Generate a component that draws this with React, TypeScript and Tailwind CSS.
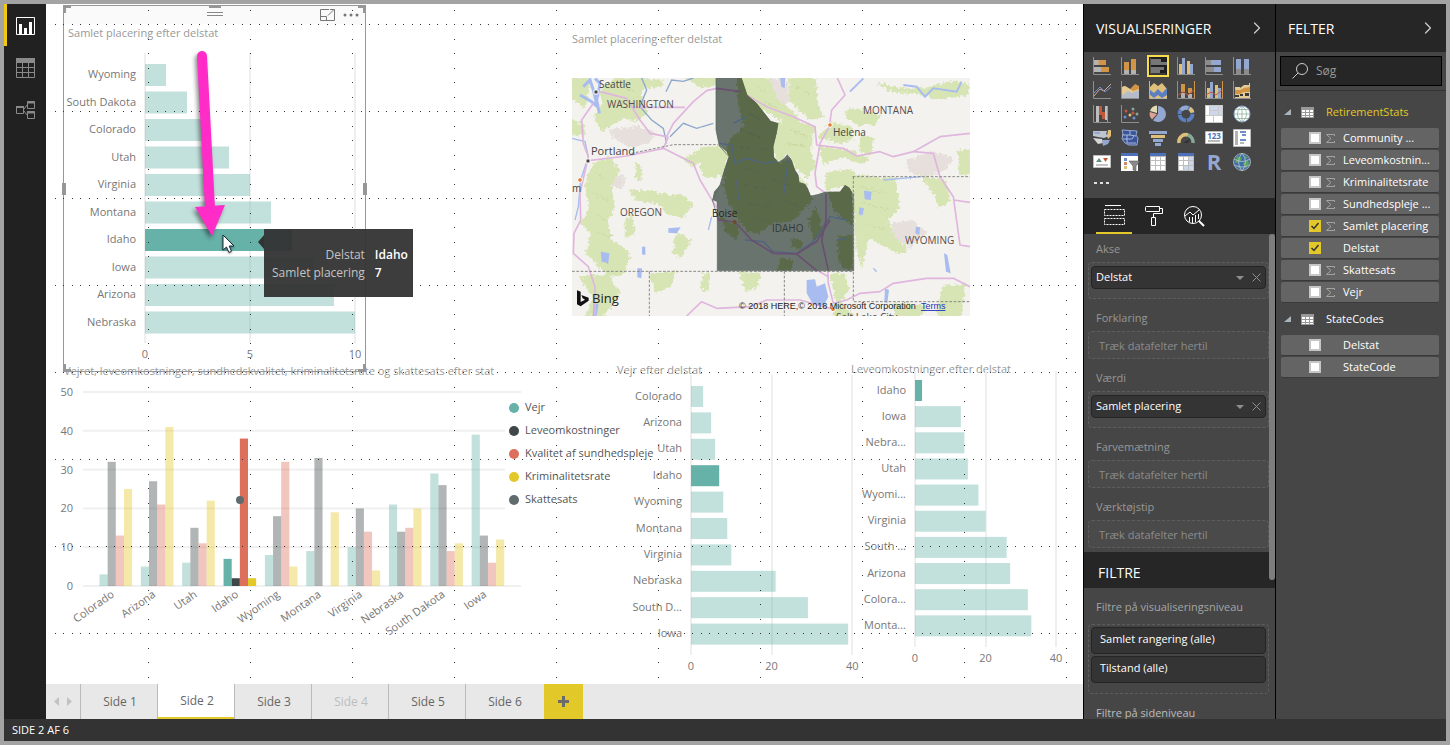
import type { ReactNode } from 'react';
import { ChevronRight } from 'lucide-react';

type Row = [string, number];

const ranking: Row[] = [
  ['Wyoming', 1], ['South Dakota', 2], ['Colorado', 3], ['Utah', 4], ['Virginia', 5],
  ['Montana', 6], ['Idaho', 7], ['Iowa', 8], ['Arizona', 9], ['Nebraska', 10],
];

const weather: Row[] = [
  ['Colorado', 3], ['Arizona', 5], ['Utah', 6], ['Idaho', 7], ['Wyoming', 8],
  ['Montana', 9], ['Virginia', 10], ['Nebraska', 21], ['South D...', 29], ['Iowa', 39],
];

const living: Row[] = [
  ['Idaho', 2], ['Iowa', 13], ['Nebra...', 14], ['Utah', 15], ['Wyomi...', 18],
  ['Virginia', 20], ['South ...', 26], ['Arizona', 27], ['Colora...', 32], ['Monta...', 33],
];

const combined: [string, number[]][] = [
  ['Colorado', [3, 32, 13, 25]],
  ['Arizona', [5, 27, 21, 41]],
  ['Utah', [6, 15, 11, 22]],
  ['Idaho', [7, 2, 38, 2]],
  ['Wyoming', [8, 18, 32, 5]],
  ['Montana', [9, 33, 0, 19]],
  ['Virginia', [10, 20, 14, 4]],
  ['Nebraska', [21, 14, 15, 20]],
  ['South Dakota', [29, 26, 9, 11]],
  ['Iowa', [39, 13, 6, 12]],
];

const seriesColors = ['#66b1a8', '#3f4749', '#dd705c', '#e3c829'];

const legend = [
  { label: 'Vejr', color: '#66b1a8' },
  { label: 'Leveomkostninger', color: '#3f4749' },
  { label: 'Kvalitet af sundhedspleje', color: '#dd705c' },
  { label: 'Kriminalitetsrate', color: '#e3c829' },
  { label: 'Skattesats', color: '#5f6b6d' },
];

const tables = [
  {
    name: 'RetirementStats',
    active: true,
    fields: [
      { label: 'Community ...', sum: true },
      { label: 'Leveomkostnin...', sum: true },
      { label: 'Kriminalitetsrate', sum: true },
      { label: 'Sundhedspleje ...', sum: true },
      { label: 'Samlet placering', sum: true, checked: true },
      { label: 'Delstat', checked: true },
      { label: 'Skattesats', sum: true },
      { label: 'Vejr', sum: true },
    ],
  },
  {
    name: 'StateCodes',
    active: false,
    fields: [{ label: 'Delstat' }, { label: 'StateCode' }],
  },
] as { name: string; active: boolean; fields: { label: string; sum?: boolean; checked?: boolean }[] }[];

const wells = [
  { label: 'Akse', value: 'Delstat' },
  { label: 'Forklaring' },
  { label: 'Værdi', value: 'Samlet placering' },
  { label: 'Farvemætning' },
  { label: 'Værktøjstip' },
];

interface BarChartProps {
  rows: Row[];
  width: number;
  height: number;
  x0: number;
  unit: number;
  y0: number;
  step: number;
  bar: number;
  grid: [number, number];
  ticks: number[];
}

const BarChart = ({ rows, width, height, x0, unit, y0, step, bar, grid, ticks }: BarChartProps) => (
  <svg width={width} height={height} className="block overflow-visible">
    {ticks.map((t) => (
      <g key={t}>
        <rect x={Math.round(x0 + t * unit) - 1} y={grid[0]} width={2} height={grid[1] - grid[0]} fill="#efefef" />
        <text x={x0 + t * unit} y={grid[1] + 15} textAnchor="middle" className="fill-[#777777] text-[11px]">{t}</text>
      </g>
    ))}
    {rows.map(([name, value], i) => (
      <g key={name}>
        <rect
          x={x0}
          y={y0 + i * step}
          width={value * unit}
          height={bar}
          fill="#66b1a8"
          opacity={name === 'Idaho' ? 1 : 0.4}
        />
        <text x={x0 - 9} y={y0 + i * step + bar / 2 + 3} textAnchor="end" className="fill-[#777777] text-[11px]">{name}</text>
      </g>
    ))}
  </svg>
);

const ColumnChart = () => (
  <svg width={445} height={270} className="block shrink-0 overflow-visible">
    {[0, 10, 20, 30, 40, 50].map((t) => (
      <g key={t}>
        <rect x={19} y={207 - t * 3.88} width={t % 50 === 0 ? 438 : 422} height={2} fill="#f0f0f0" />
        <text x={9} y={212 - t * 3.88} textAnchor="end" className="fill-[#777777] text-[11px]">{t}</text>
      </g>
    ))}
    {combined.map(([name, values], i) => (
      <g key={name}>
        {values.map((v, s) => (
          <rect
            key={s}
            x={35.5 + i * 41.35 + s * 8.15}
            y={208 - v * 3.88}
            width={8.15}
            height={v * 3.88}
            fill={seriesColors[s]}
            opacity={name === 'Idaho' ? 1 : 0.4}
          />
        ))}
        <text
          transform={`translate(${51 + i * 41.35} 218) rotate(-35)`}
          textAnchor="end"
          className="fill-[#777777] text-[11px]"
        >
          {name}
        </text>
      </g>
    ))}
    <circle cx={176} cy={122} r={4} fill="#5f6b6d" />
  </svg>
);

const StateMap = () => (
  <svg width={398} height={238} className="block">
    <defs>
      <filter id="rough" x="-5%" y="-5%" width="110%" height="110%">
        <feTurbulence type="fractalNoise" baseFrequency="0.1" numOctaves="4" seed="4" />
        <feDisplacementMap in="SourceGraphic" scale="22" xChannelSelector="R" yChannelSelector="G" />
      </filter>
      <filter id="ragged">
        <feTurbulence type="fractalNoise" baseFrequency="0.2" numOctaves="2" seed="8" />
        <feDisplacementMap in="SourceGraphic" scale="5" xChannelSelector="R" yChannelSelector="G" />
      </filter>
      <clipPath id="idaho">
        <path d="M468 174H545L562 225L590 250L622 290L632 303L655 310L650 340L640 380L642 412L655 426L672 415L682 403L695 420L705 450L715 465L718 487L735 492L745 508L752 527L775 522L795 515H840L855 495L868 503L878 520L881 752H472V590L470 545L457 540L462 515L480 495L492 450L507 410L500 395L478 378L472 350L468 330Z" />
      </clipPath>
    </defs>
    <rect width={398} height={238} fill="#f3f2ee" />
    <g transform="scale(.33333) translate(-36 -174)">
      {/* towns and dry land */}
      <g fill="#e6dfdb" filter="url(#rough)">
        <path d="M145 330L230 318L290 335L270 365L215 385L160 350Z M620 174L680 180L690 240L660 270L625 225Z M1040 420L1120 395L1180 410L1160 450L1100 470L1045 455Z M995 610L1060 600L1100 640L1050 680L1000 660Z M150 460L195 470L190 505L155 500Z" />
      </g>
      {/* forests */}
      <g fill="#d7e4b3" stroke="#d7e4b3" strokeWidth="5" filter="url(#rough)">
        <path d="M165 174H250L245 230L262 280L225 300L190 290L165 310L125 330L105 290L130 250L120 215Z" />
        <path d="M36 174H90L75 260L36 235Z M36 300L75 320L70 345L36 340Z" />
        <path d="M100 430L150 415L175 450L150 500L165 560L140 600L155 660L210 700L190 760L150 770L120 740L80 700L95 640L65 610L90 560L75 500Z" />
        <path d="M60 770L140 765L180 820L130 888H80L100 830Z M270 762L345 758L330 800L290 815Z" />
        <path d="M210 510L290 520L370 530L395 550L370 590L320 580L300 550L230 540Z M350 640L390 660L365 710L340 700Z" />
        <path d="M375 415L430 385L490 380L505 410L485 465L440 475L420 440L430 415L395 440Z" />
        <path d="M250 180L310 182L300 200L255 200Z M385 174H470V195L420 200Z" />
        <path d="M545 174H625L650 240L690 270L720 300L700 330L665 300L590 260L560 225Z" />
        <path d="M690 174H765L770 250L790 290L750 295L715 265L690 240Z" />
        <path d="M655 310L690 300L760 320L750 400L765 440L740 470L710 445L685 400L650 425L640 380Z" />
        <path d="M865 265L915 270L960 290L945 310L900 315L860 290Z M815 310L870 320L880 355L840 370L780 350Z M905 350L940 355L930 405L900 390Z" />
        <path d="M780 380L860 390L925 415L905 430L850 410L790 430Z M800 460L870 450L890 470L1005 475L1015 560L985 600L1000 650L1040 690L1020 700L960 670L925 650L905 740L890 680L880 520L855 495L800 510Z" />
        <path d="M955 190L1010 205L1100 205L1180 185L1225 195L1220 225L1140 235L1080 220L1000 215Z M1085 470L1150 480L1170 540L1140 560L1120 520Z" />
        <path d="M1195 395L1230 390V460L1200 465Z M810 765L850 760L865 800L840 850L880 888H820L830 830Z M1150 800L1215 795L1200 888H1130Z M1000 852L1100 858L1080 888H1010Z" />
        <path d="M540 760L600 760L590 800L560 810Z M430 760L450 765L440 810L425 805Z" />
        <path d="M195 600L215 590L220 640L200 650Z M230 430L245 440L240 480L228 470Z M700 470L740 490L735 510L710 490Z" />
      </g>
      <g fill="none" stroke="#c9d8a1" strokeWidth="3" filter="url(#rough)">
        <path d="M110 460L140 480M100 520L140 540M105 580L135 600M110 640L150 650M180 200L230 215M170 240L230 260M590 200L620 215M610 240L650 265M710 200L750 220M900 500L980 520M910 550L990 570M920 610L970 630M690 330L740 350M680 370L740 380" />
      </g>
      {/* lakes and rivers */}
      <g fill="#a8bcf0" filter="url(#ragged)">
        <path d="M740 780L765 778L770 800L795 790L805 830L790 860L760 855L740 820Z M912 512L935 515L932 540L914 538Z M898 562L912 565L908 585L896 583Z M1068 620L1080 622L1078 645L1066 640Z M660 174H676L674 205L664 200Z M122 695L148 700L145 730L125 725Z M232 745L246 745L244 775L232 772Z M246 680L256 680L256 705L246 703Z M325 625L362 622L350 640L325 638Z" />
        <path d="M1152 700L1162 705L1172 760L1158 755Z M975 805L987 810L982 850L973 845Z M100 850L116 852L110 888H98Z" />
      </g>
      <g fill="none" stroke="#a8bcf0" strokeWidth="4" filter="url(#ragged)">
        <path d="M70 200L90 180L100 210L112 260L95 245L60 225M105 175L120 190L110 240L118 280" strokeWidth="9" />
        <path d="M36 355L75 365L85 410L62 480L55 560L45 600" />
        <path d="M245 174L260 210L240 260L275 300L310 325L320 370M330 350L370 310L410 325L460 310" stroke="#8ca8cc" />
        <path d="M318 215L335 180L370 184L400 174" stroke="#8ca8cc" />
        <path d="M870 215L910 175M1030 195L1070 200L1095 230L1120 205L1190 215L1205 185" strokeWidth="6" />
        <path d="M455 590L445 630M970 480L1085 470M940 745L950 755" />
      </g>
      {/* highways */}
      <g fill="none" stroke="#e0b6de" strokeWidth="5" strokeLinejoin="round">
        <path d="M120 215L200 235L240 300L270 340L320 350L340 310L400 245L440 212L470 205L560 225L620 260L700 290L765 320L770 375L850 385L890 408L960 395L1000 410L1060 395L1140 350L1230 340" />
        <path d="M215 262H375M100 250L65 300L70 370L85 410L60 520L62 600L42 640L40 700L85 740L105 800V888" />
        <path d="M85 422L200 408L310 385L400 430L420 480L450 530L475 570L525 606L575 660L640 700L710 702L770 750L805 770" />
        <path d="M310 385L325 350M832 174L855 225L815 270L808 320L780 370L765 460L770 500L798 520" />
        <path d="M1060 395L1120 400L1140 470L1180 530L1200 675L1230 680M1180 540L1230 547" />
        <path d="M800 670L805 790L820 850L860 840L900 820L960 815L1000 790L1100 775L1180 775L1230 800M380 888L425 845L470 865L570 860L620 840H720L810 865" />
      </g>
      {/* Idaho, selected */}
      <g clipPath="url(#idaho)">
        <rect x="450" y="170" width="440" height="590" fill="#6a746e" />
        <g fill="#5a6b49" filter="url(#rough)">
          <path d="M535 160L560 170L670 300L660 430L690 410L740 490L760 540L700 600L640 610L600 640L560 635L515 570L490 500L500 420L500 370L550 320L530 220Z" />
          <path d="M800 515L880 490V620L850 600L820 570Z M770 560L790 640L760 660L745 600Z M480 590L540 620L530 660L500 640Z M830 650L881 640V752L840 740Z M700 650L730 665L720 690L695 680Z M660 715L700 720L695 752H650Z" />
        </g>
        <g fill="none" stroke="#52634a" strokeWidth="3" filter="url(#rough)">
          <path d="M540 230L590 250M560 280L610 300M540 330L600 350M540 380L620 390M550 440L610 460M550 490L620 510M560 550L630 560M640 480L690 500M670 540L720 560M570 590L620 600" />
        </g>
        <g fill="none" stroke="#4e6380" strokeWidth="4" filter="url(#ragged)">
          <path d="M478 370L515 375L525 430L560 415L610 430L650 425M530 480L535 540M520 310L560 290M685 420L670 530M555 660L610 665L640 695L710 700L760 665L810 590L860 600M830 660L860 655" />
        </g>
        <g fill="none" stroke="#694f70" strokeWidth="5">
          <path d="M450 530L475 600L525 606L575 660L640 700L710 702L810 785M798 520V600L785 660L805 752M710 702L770 665L810 600M468 205L545 215" />
        </g>
        <circle cx="524" cy="606" r="6" fill="#6e4a26" />
      </g>
      <g fill="none" stroke="#888888" strokeWidth="3" strokeDasharray="8 5">
        <path d="M215 400L340 374H475M36 754H882M268 754V888M673 754V888M878 470H1230M880 470V845H1230" />
      </g>
      <path d="M468 174V330L478 378L507 410L480 495L457 540L472 590V752H881V520" fill="none" stroke="#56605a" strokeWidth="2" />
      <g stroke="#ffffff" strokeWidth="3">
        <path d="M102 210h12v12h-12zM78 417h12v12H78z" fill="#444444" />
        <circle cx="810" cy="315" r="7" fill="#e2813a" />
        <circle cx="60" cy="480" r="7" fill="#e2813a" />
        <circle cx="819" cy="868" r="7" fill="#e2813a" />
      </g>
      <path d="M51 811L62 815V846L75 839L68 835L64 825L86 833V842L62 859L51 853Z" fill="#111111" />
    </g>
    <g className="fill-[#444444] text-[11px]">
      <text x={27} y={10} className="text-[10px]">Seattle</text>
      <text x={19} y={77}>Portland</text>
      <text x={261} y={58} className="text-[10px]">Helena</text>
      <text x={0} y={114} className="text-[10px]">m</text>
      <text x={140} y={139} className="fill-[#222222] text-[10px]">Boise</text>
      <text x={264} y={243} className="text-[10px]">Salt Lake City</text>
    </g>
    <g className="fill-[#594d50] text-[10px]">
      <text x={35} y={30}>WASHINGTON</text>
      <text x={291} y={36}>MONTANA</text>
      <text x={48} y={138}>OREGON</text>
      <text x={200} y={154} className="fill-[#303a35]">IDAHO</text>
      <text x={333} y={166}>WYOMING</text>
    </g>
    <text x={20} y={225} className="fill-[#222222] text-[13px]">Bing</text>
    <text x={167} y={231} className="fill-[#222222] font-['Liberation_Sans'] text-[9px]">© 2018 HERE,© 2018 Microsoft Corporation</text>
    <a href="#terms">
      <text x={349} y={231} className="fill-[#2236c0] font-['Liberation_Sans'] text-[9px] underline">Terms</text>
    </a>
  </svg>
);

const Axis = () => <path d="M.5 0V17.5H18" fill="none" stroke="#8f8f8f" />;

// gallery of visual types, six per row
const visualIcons: [string, ReactNode][] = [
  ['Stablet liggende', <><Axis /><path d="M1 3h5v5H1zM1 10h7v5H1z" fill="#b3b3b3" /><path d="M5.500 3H13v5H5.500zM8 10h8v5H8z" fill="#d29447" /></>],
  ['Stablet søjle', <><Axis /><path d="M3 13h5v4H3zM10 13h5v4h-5z" fill="#b3b3b3" /><path d="M3 5h5v8H3zM10 2h5v11h-5z" fill="#d29447" /></>],
  ['Grupperet liggende', <><path d="M-1-1h20v20H-1z" fill="#1f1f1f" stroke="#f5dc4a" strokeWidth="2" /><path d="M1.500 1V17H17" fill="none" stroke="#555" /><path d="M2 2h10v3H2zM2 5h16v3H2zM2 10h13v3H2zM2 13h9v3H2z" fill="#777" /></>],
  ['Grupperet søjle', <><Axis /><path d="M2 7h3v10H2zM10 4h3v13h-3z" fill="#dfc07a" /><path d="M5 1h3v16H5zM13 7h3v10h-3z" fill="#94a7d0" /></>],
  ['100% liggende', <><Axis /><path d="M1 3h5v5H1zM1 10h8v5H1z" fill="#8c8c8c" /><path d="M6 3h10v5H6zM9 10h7v5H9z" fill="#94a7d0" /></>],
  ['100% søjle', <><Axis /><path d="M3 12h5v5H3zM11 12h5v5h-5z" fill="#8c8c8c" /><path d="M3 2h5v10H3zM11 2h5v10h-5z" fill="#94a7d0" /></>],
  ['Kurve', <><Axis /><path d="M1 15L7 8l4 2 7-7" fill="none" stroke="#d9a596" /><path d="M1 12l6-6 5 5 6-5" fill="none" stroke="#6f8fcb" /></>],
  ['Område', <><Axis /><path d="M1 6l3-1 5 3 5-5 4 2v12H1z" fill="#d29447" /><path d="M1 6l3-1 5 3 3 2 6-2v9H1z" fill="#e5cb93" /><path d="M1 14l6-4 4 2 7-3v8H1z" fill="#a9b9d8" opacity=".8" /></>],
  ['Stablet område', <><path d="M0 7l5-5 4 3 4-3 5 6v9H0z" fill="#dfc07a" /><path d="M0 8l5 4 4-4 4 4 5-5v7l-5 3-4-3-4 3-5-4z" fill="#5b7fc0" /><path d="M.5 0V17.500H18" fill="none" stroke="#b3b3b3" /></>],
  ['Kurve og stablet søjle', <><Axis /><path d="M4 3h4v8H4zM11 7h4v5h-4z" fill="#d29447" /><path d="M4 12h4v5H4zM11 13h4v4h-4z" fill="#b3b3b3" /><path d="M17.500 0v17" stroke="#d29447" /><path d="M1 14l5-3 5 3 6-5" fill="none" stroke="#c4583a" /></>],
  ['Kurve og grupperet søjle', <><Axis /><path d="M2 7h3v10H2zM10 4h3v13h-3z" fill="#dfc07a" /><path d="M5 1h3v16H5zM13 7h3v10h-3z" fill="#94a7d0" /><path d="M17.500 0v17" stroke="#d29447" /><path d="M1 14l5-3 5 3 6-5" fill="none" stroke="#c4583a" /></>],
  ['Bånd', <><Axis /><path d="M2 6h5v11H2zM7 7l4-3v13H7zM11 4h5V2h1v15h-6z" fill="#e5cb93" /><path d="M2 9h5l4-2 6-1v5h-6l-4 2H2z" fill="#d29447" /><path d="M2 14h4v2H2zM7 13h3v2H7zM12 12h4v3h-4z" fill="#3a3a3a" /></>],
  ['Vandfald', <><Axis /><path d="M3 1h3v16H3zM12 1h3v14h-3z" fill="#bdbdbd" /><path d="M6 1h3v9H6zM9 7h3v7H9z" fill="#c4583a" /><path d="M14 1h1v16h-1z" fill="#7fa894" /></>],
  ['Punkt', <><Axis /><g fill="#c4583a"><circle cx="5" cy="6" r="1.500" /><circle cx="12" cy="8" r="1.500" /></g><g fill="#86a998"><circle cx="12" cy="4" r="1.500" /><circle cx="16" cy="9" r="1.500" /></g><g fill="#6f8fcb"><circle cx="4" cy="12" r="1.500" /><circle cx="13" cy="13" r="1.500" /></g><circle cx="9" cy="10" r="1.500" fill="#dfc07a" /></>],
  ['Cirkel', <><path d="M9 9V1a8 8 0 1 1-5 14.300z" fill="#94a7d0" /><path d="M8 8L1 6a8 8 0 0 1 7-5.500z" fill="#e5d9b3" /><path d="M8 9l-5 5.500A8 8 0 0 1 .800 7z" fill="#dba495" /></>],
  ['Krans', <g fill="none" strokeWidth="4"><circle cx="9" cy="9" r="6.500" stroke="#5b7fc0" strokeDasharray="9 1" /><path d="M4 5a6.500 6.500 0 0 1 7-2" stroke="#94a7d0" /><path d="M12.500 3.500a6.500 6.500 0 0 1 3 4" stroke="#dfc07a" /></g>],
  ['Træstruktur', <><path d="M0 0h18v18H0z" fill="#c9c9c9" /><path d="M1 1h3v9H1zM1 11h7v6H1zM9 11h8v6H9z" fill="#fff" /><path d="M5 1h8v4H5zM5 6h8v4H5zM14 1h3v9h-3z" fill="#ced7ea" /></>],
  ['Kort', <><circle cx="9" cy="9" r="8" fill="#fff" stroke="#8fa6cf" /><path d="M9 1v16M1 9h16M3 4.500h12M3 13.500h12M9 1C3 5 3 13 9 17M9 1c6 4 6 12 0 16" fill="none" stroke="#7fa894" strokeWidth=".7" /></>],
  ['Kartogram', <><path d="M0 2h14l-1 3 3 2-5 2-6-1-5-1z" fill="#bfc5cf" /><path d="M0 3h7v2H2z" fill="#94a7d0" /><path d="M15 1h3v6l-3 3-1-3z" fill="#dfc07a" /><path d="M0 9l9 1 1 4-5 1z" fill="#d6d6d6" /><path d="M9 11l8 0-2 4-5 2z" fill="#94a7d0" /></>],
  ['Figurkort', <><path d="M1 1l15 1-1 4 2 3-1 7H8l-4-2-3-4 1-5z" fill="#39549a" stroke="#94a7d0" /><path d="M1 6h8v-4M9 6l6 1M6 6v8l9 0M2 10h9l2-3" fill="none" stroke="#a9b9d8" /></>],
  ['Tragt', <><path d="M0 2h18v3H0zM4 10h10v3H4z" fill="#94a7d0" /><path d="M2 6h14v3H2z" fill="#dfc07a" /><path d="M6 14h6v3H6z" fill="#94a7d0" /></>],
  ['Måler', <g fill="none" strokeWidth="3.500"><path d="M2 14a7 7 0 0 1 9-8" stroke="#dfc07a" /><path d="M11 6a7.500 7.500 0 0 1 5 8" stroke="#86a998" /><path d="M6 14h5l2-4z" fill="#303030" stroke="none" /></g>],
  ['Kort med tal', <><path d="M.5 2.500h17v12H.5z" fill="#fff" stroke="#bdbdbd" /><text x="9" y="9.500" textAnchor="middle" fill="#4c71b8" fontSize="8" fontWeight="700">123</text><path d="M3 12h12" stroke="#777" /></>],
  ['Kort med flere rækker', <><path d="M.5.5h17v17H.5z" fill="#fff" stroke="#bdbdbd" /><path d="M2 2h3v14H2z" fill="#b3b3b3" /><path d="M7 3h6M9 6h4M7 11h6" stroke="#6f8fcb" strokeWidth="2" /><path d="M7 14h4" stroke="#777" /></>],
  ['KPI', <><path d="M.5 2.500h17v12H.5z" fill="#fff" stroke="#bdbdbd" /><path d="M3 9l3-4 3 4z" fill="#629079" /><path d="M10 5h5l-2.500 4z" fill="#c4583a" /><path d="M3 12h12" stroke="#888" /></>],
  ['Udsnit', <><path d="M0 0h17v18H0z" fill="#fff" /><path d="M0 0h17v3H0z" fill="#4c71b8" /><path d="M3 5h3v3H3z" fill="#6f8fcb" /><path d="M3 9h3v3H3z" fill="#c98a6f" /><path d="M3 13h3v3H3z" fill="#dfc07a" /><path d="M8 8h11l-4 5v5l-3-1v-4z" fill="#8a8a8a" stroke="#444" strokeWidth=".5" /></>],
  ['Tabel', <><path d="M1 0h16v18H1z" fill="#bdbdbd" /><path d="M1 0h16v3H1z" fill="#4c71b8" /><path d="M2 4h4v3H2zM7 4h4v3H7zM12 4h4v3h-4zM2 8h4v4H2zM7 8h4v4H7zM12 8h4v4h-4zM2 13h4v4H2zM7 13h4v4H7zM12 13h4v4h-4z" fill="#fff" /></>],
  ['Matrix', <><path d="M1 0h16v18H1z" fill="#bdbdbd" /><path d="M1 0h16v3H1z" fill="#4c71b8" /><path d="M2 4h4v3H2zM7 4h4v3H7zM2 8h4v4H2zM7 8h4v4H7zM2 13h4v4H2z" fill="#fff" /><path d="M12 4h4v3h-4zM12 8h4v4h-4zM7 13h4v4H7zM12 13h4v4h-4z" fill="#ced7ea" /></>],
  ['R-script', <text x="9" y="17" textAnchor="middle" fill="#94a7d0" fontSize="22" fontWeight="700">R</text>],
  ['ArcGIS', <><circle cx="9" cy="9" r="8.500" fill="#3f6eab" stroke="#a5a5a5" /><path d="M4 3l5 2-2 4-5 1zM10 10l5-3 1 4-4 5zM4 12l4 2-1 2zM11 2l4 3-3 1z" fill="#57a55b" /><path d="M1 6q8 5 16 0M1 12q8 4 16 0M9 0q-7 9 0 18M9 0q7 9 0 18" fill="none" stroke="#b9c3cf" strokeWidth=".8" /></>],
];

const Dots = () => (
  <svg className="pointer-events-none absolute inset-0 h-full w-full">
    <defs>
      <pattern id="dots" width={102} height={87} y={20} patternUnits="userSpaceOnUse">
        <path
          d="M0 0h1v1H0zM9 0h1v1h-1zM17 0h1v1h-1zM26 0h1v1h-1zM34 0h1v1h-1zM43 0h1v1h-1zM51 0h1v1h-1zM60 0h1v1h-1zM68 0h1v1h-1zM77 0h1v1h-1zM85 0h1v1h-1zM94 0h1v1h-1zM0 15h1v1H0zM0 29h1v1H0zM0 44h1v1H0zM0 58h1v1H0zM0 73h1v1H0z"
          fill="#333333"
        />
      </pattern>
    </defs>
    <rect x={2} width="100%" height="100%" fill="url(#dots)" />
  </svg>
);

const VisualTitle = ({ children }: { children: ReactNode }) => (
  <h2 className="text-[11px] leading-[14px] whitespace-nowrap text-[#999999]">{children}</h2>
);

const Handle = ({ className }: { className: string }) => <span className={`absolute bg-[#979797] ${className}`} />;

const Canvas = () => (
  <main className="relative min-h-0 flex-1 overflow-hidden bg-white">
    <section className="absolute top-[360px] left-[18px]">
      <VisualTitle>Vejret, leveomkostninger, sundhedskvalitet, kriminalitetsrate og skattesats efter stat</VisualTitle>
      <div className="flex">
        <ColumnChart />
        <ul className="pt-4.5 text-[11px] whitespace-nowrap text-[#555555]">
          {legend.map((item) => (
            <li key={item.label} className="flex h-[23px] items-center gap-1.5">
              <svg width={10} height={10}>
                <circle cx={5} cy={5} r={5} fill={item.color} />
              </svg>
              {item.label}
            </li>
          ))}
        </ul>
      </div>
    </section>

    <section className="absolute top-[359px] left-[571px]">
      <VisualTitle>Vejr efter delstat</VisualTitle>
      <BarChart rows={weather} width={240} height={300} x0={74} unit={4.03} y0={9} step={26.4} bar={21} grid={[-2, 278]} ticks={[0, 20, 40]} />
    </section>

    <section className="absolute top-[358px] left-[805px]">
      <VisualTitle>Leveomkostninger efter delstat</VisualTitle>
      <BarChart rows={living} width={210} height={290} x0={64} unit={3.525} y0={4} step={26.15} bar={21} grid={[-5, 271]} ticks={[0, 20, 40]} />
    </section>

    {/* selected visual */}
    <section className="absolute top-px left-[17px] h-[367px] w-[303px] border border-[#979797]">
      <div className="flex h-4.5 items-center justify-end gap-2 bg-[#fafafa] pr-1.5">
        <button aria-label="Fokustilstand">
          <svg width={15} height={12} viewBox="0 0 15 12" fill="none" stroke="#777777" className="block">
            <path d="M9 .5H.5v11h14V5M.5 7.500h6v4M8 6.500L14 .5M10 .5h4.500V5" />
          </svg>
        </button>
        <button aria-label="Flere indstillinger">
          <svg width={16} height={4} fill="#777777" className="block">
            <circle cx={2} cy={2} r={1.5} />
            <circle cx={8} cy={2} r={1.5} />
            <circle cx={14} cy={2} r={1.5} />
          </svg>
        </button>
      </div>
      <div className="pt-0.5 pl-1">
        <VisualTitle>Samlet placering efter delstat</VisualTitle>
      </div>
      <BarChart rows={ranking} width={300} height={320} x0={81} unit={21} y0={24} step={27.5} bar={22} grid={[13, 303]} ticks={[0, 5, 10]} />
      <span className="absolute top-1.5 left-1/2 h-1 w-4 -translate-x-1/2 border-y border-[#888888]" />
      <Handle className="-top-px -left-px h-2 w-[3px]" />
      <Handle className="-top-px -left-px h-[3px] w-2" />
      <Handle className="-top-px -right-px h-2 w-[3px]" />
      <Handle className="-top-px -right-px h-[3px] w-2" />
      <Handle className="-bottom-px -left-px h-2 w-[3px]" />
      <Handle className="-bottom-px -left-px h-[3px] w-2" />
      <Handle className="-right-px -bottom-px h-2 w-[3px]" />
      <Handle className="-right-px -bottom-px h-[3px] w-2" />
      <Handle className="-top-px left-1/2 h-[3px] w-3 -translate-x-1/2" />
      <Handle className="top-1/2 -left-0.5 h-3 w-1 -translate-y-1/2" />
      <Handle className="top-1/2 -right-0.5 h-3 w-1 -translate-y-1/2" />
    </section>

    <Dots />

    <section className="absolute top-7 left-[526px]">
      <VisualTitle>Samlet placering efter delstat</VisualTitle>
      <div className="mt-8">
        <StateMap />
      </div>
    </section>

    {/* arrow and pointer */}
    <svg width={60} height={210} className="absolute top-11 left-[142px] overflow-visible drop-shadow-[-2px_3px_2px_rgba(0,0,0,0.45)]">
      <path d="M14 8L22 160" stroke="#ff2cc8" strokeWidth={10} strokeLinecap="round" />
      <path d="M7 159L37 157L24 188Z" fill="#ff2cc8" />
    </svg>
    <svg width={14} height={20} viewBox="0 0 14 20" className="absolute top-[230px] left-[176px] drop-shadow-[0_1px_1px_rgba(0,0,0,0.4)]">
      <path d="M1 1V16L4.500 13L7 18.500L9.500 17.300L7.200 12H12Z" fill="#ffffff" stroke="#1b2a3d" />
    </svg>

    <div role="tooltip" className="absolute top-[225px] left-[218px] flex h-[68px] w-[149px] items-center bg-[#333333]/95 pt-0.5 pr-1 pl-2 text-[12px] leading-[18px]">
      <svg width={6} height={14} className="absolute top-1.5 -left-1.5">
        <path d="M6 0V14L0 7Z" fill="#333333" />
      </svg>
      <dl className="grid flex-1 grid-cols-[auto_1fr] gap-x-2.5 whitespace-nowrap">
        <dt className="text-right text-[#c4c4c4]">Delstat</dt>
        <dd className="font-semibold text-white">Idaho</dd>
        <dt className="text-right text-[#c4c4c4]">Samlet placering</dt>
        <dd className="font-semibold text-white">7</dd>
      </dl>
    </div>
  </main>
);

const pages = ['Side 1', 'Side 2', 'Side 3', 'Side 4', 'Side 5', 'Side 6'];

const PageTabs = () => (
  <nav className="flex h-[35px] shrink-0 bg-[#e8e8e8] text-[12px] font-medium text-[#666666]">
    <div className="flex w-[34px] items-center justify-center gap-2">
      <button aria-label="Forrige side">
        <svg width={5} height={9} className="block"><path d="M5 0V9L0 4.500Z" fill="#c2c2c2" /></svg>
      </button>
      <button aria-label="Næste side">
        <svg width={5} height={9} className="block"><path d="M0 0V9L5 4.500Z" fill="#c2c2c2" /></svg>
      </button>
    </div>
    {pages.map((page) => (
      <button
        key={page}
        className={`w-[77px] border-l border-[#bbbbbb] pl-0.5 ${page === 'Side 2' ? 'border-b-2 border-b-[#e3c829] bg-white' : ''} ${page === 'Side 4' ? 'text-[#bdbdbd]' : ''}`}
      >
        {page}
      </button>
    ))}
    <button aria-label="Ny side" className="ml-0.5 flex w-[39px] items-center justify-center bg-[#e3c829]">
      <svg width={11} height={11}><path d="M4 0h3v4h4v3H7v4H4V7H0V4h4z" fill="#6b6b6b" /></svg>
    </button>
  </nav>
);

const NavRail = () => (
  <nav className="flex w-[42px] shrink-0 flex-col bg-[#212121]">
    <button aria-label="Rapport" className="flex h-[42px] items-center justify-center border-l-3 border-[#f2c811] pt-0.5 pr-0.5">
      <svg width={19} height={18} viewBox="0 0 19 18">
        <path d="M.5.5h18v17H.5z" fill="none" stroke="#ffffff" />
        <path d="M3 7h3v10H3zM8 11h3v6H8zM13 5h3v12h-3z" fill="#ffffff" />
      </svg>
    </button>
    <button aria-label="Data" className="flex h-[42px] items-center justify-center pt-0.5">
      <svg width={19} height={20} viewBox="0 0 19 20">
        <path d="M.5.5h18v19H.5zM.5 9.500h18M.5 14.500h18M6.500 5v15M12.500 5v15" fill="none" stroke="#8a8a8a" />
        <path d="M0 0h19v5H0z" fill="#8a8a8a" />
      </svg>
    </button>
    <button aria-label="Relationer" className="flex h-[42px] items-center justify-center pt-0.5">
      <svg width={19} height={18} viewBox="0 0 19 18" fill="none" stroke="#8a8a8a">
        <path d="M.5 5.500h7v7h-7zM11.500.5h7v7h-7zM11.500 10.500h7v7h-7zM8 8l3-4M8 10l3 4" />
        <path d="M0 6h8M11 1.500h8M11 11.500h8" strokeWidth={2} />
      </svg>
    </button>
  </nav>
);

const PanelHeader = ({ children }: { children: ReactNode }) => (
  <div className="flex h-12 shrink-0 items-center justify-between bg-[#262626] pr-2 pl-3">
    <h2 className="text-[14px] font-medium text-white">{children}</h2>
    <button aria-label="Skjul rude">
      <ChevronRight size={20} strokeWidth={1.5} className="text-[#cccccc]" />
    </button>
  </div>
);

const FieldWell = ({ label, value }: { label: string; value?: string }) => (
  <div className="mb-1">
    <h3 className="h-7 pl-2 text-[11px] leading-[30px] text-[#979797]">{label}</h3>
    {value ? (
      <div className="h-[37px] rounded-sm border border-dashed border-[#5e5e5e] bg-[#4a4a4a] px-0.5 pt-[3px]">
        <div className="flex h-[23px] items-center rounded-sm border border-[#242424] bg-[#343434] px-1 text-[11px] text-white">
          <span className="flex-1">{value}</span>
          <button aria-label={`Indstillinger for ${value}`} className="mr-2">
            <svg width={8} height={4} className="block"><path d="M0 0h8L4 4z" fill="#8f8f8f" /></svg>
          </button>
          <button aria-label={`Fjern ${value}`}>
            <svg width={9} height={9} className="block"><path d="M.5.5l8 8M8.500.5l-8 8" stroke="#8f8f8f" /></svg>
          </button>
        </div>
      </div>
    ) : (
      <div className="h-7 rounded-sm border border-dashed border-[#5e5e5e] bg-[#4a4a4a] pl-2.5 text-[11px] leading-7 text-[#8c8c8c]">
        Træk datafelter hertil
      </div>
    )}
  </div>
);

const VisualizationsPane = () => (
  <aside className="flex w-[193px] shrink-0 flex-col overflow-hidden border-x border-black bg-[#464646]">
    <PanelHeader>VISUALISERINGER</PanelHeader>
    <div className="h-[146px] shrink-0 pt-0.5 pl-1">
      <div className="grid w-[168px] grid-cols-6">
        {visualIcons.map(([name, icon]) => (
          <button key={name} aria-label={name} className="flex h-6 items-center justify-center">
            <svg width={18} height={18} viewBox="0 0 18 18" className="overflow-visible">{icon}</svg>
          </button>
        ))}
      </div>
      <button aria-label="Flere visualiseringer" className="mt-2 ml-1.5 block">
        <svg width={16} height={3} className="block"><path d="M0 0h3v2H0zM6 0h3v2H6zM12 0h3v2h-3z" fill="#e0e0e0" /></svg>
      </button>
    </div>
    <div className="flex h-9 shrink-0 bg-[#262626] pl-3">
      <button aria-label="Felter" className="flex w-9 items-center justify-center border-b-2 border-[#e3c829]">
        <svg width={21} height={20} fill="none" stroke="#ffffff">
          <path d="M1 .5h16" />
          <path d="M.5 4.500h20v6H.5zM.5 13.500h20v6H.5z" strokeDasharray="2 1" />
        </svg>
      </button>
      <button aria-label="Format" className="ml-1 flex w-9 items-center justify-center">
        <svg width={19} height={21} fill="none" stroke="#ffffff">
          <path d="M.5 1.500q0-1 1-1h13v5h-13q-1 0-1-1zM14.500 2.500h3v5h-9v4M6.500 11.500h4v8h-4z" />
        </svg>
      </button>
      <button aria-label="Analyse" className="ml-1 flex w-9 items-center justify-center">
        <svg width={21} height={21} fill="none" stroke="#ffffff">
          <circle cx={9} cy={9} r={8.500} />
          <path d="M1 10l5-4 3 3 6-5M5.500 11v5M8.500 11v6M11.500 9v7M14.500 8v5" />
          <path d="M15 15l5 5" strokeWidth={2} />
        </svg>
      </button>
    </div>
    <div className="relative min-h-0 flex-1">
      <div className="pr-1.5 pl-1">
        {wells.map((well) => (
          <FieldWell key={well.label} {...well} />
        ))}
      </div>
      <h2 className="h-9 bg-[#262626] pl-3.5 text-[14px] leading-[42px] font-medium text-white">FILTRE</h2>
      <div className="pr-1.5 pl-1">
        <h3 className="h-9 pl-2 text-[11px] leading-[38px] text-[#a5a5a5]">Filtre på visualiseringsniveau</h3>
        <div className="flex h-[70px] flex-col gap-0.5 rounded-sm border border-dashed border-[#5e5e5e] px-0.5 pt-0.5">
          <button className="h-[27px] rounded border border-[#242424] bg-[#343434] pb-0.5 pl-2 text-left text-[11px] text-white">Samlet rangering (alle)</button>
          <button className="h-[27px] rounded border border-[#242424] bg-[#343434] pb-0.5 pl-2 text-left text-[11px] text-white">Tilstand (alle)</button>
        </div>
        <h3 className="h-9 pl-2 text-[11px] leading-[38px] text-[#bcbcbc]">Filtre på sideniveau</h3>
      </div>
      <div className="absolute top-0 right-0 h-[346px] w-1.5 rounded-full bg-[#7d7d7d]" />
    </div>
  </aside>
);

const FieldsPane = () => (
  <aside className="flex w-[170px] shrink-0 flex-col bg-[#464646] text-[12px] text-white">
    <PanelHeader>FELTER</PanelHeader>
    <div className="mb-1.5 border-b border-[#333333] p-1">
      <label className="flex h-[30px] items-center border border-black bg-[#262626] pl-[11px]">
        <svg width={16} height={16} fill="none" stroke="#cccccc" className="shrink-0">
          <circle cx={10} cy={6} r={5.5} />
          <path d="M6 10L.5 15.500" />
        </svg>
        <input type="text" aria-label="Søg" placeholder="Søg" className="ml-2 w-full min-w-0 outline-none placeholder:text-[#999999]" />
      </label>
    </div>
    {tables.map((table) => (
      <div key={table.name}>
        <div className="flex h-[31px] items-center pl-2 text-[11px]">
          <svg width={7} height={7} className="mr-2.5"><path d="M7 0V6H0z" fill="#a9b4ba" /></svg>
          <svg width={13} height={11} className="mr-3">
            <path d="M0 0h13v11H0z" fill="#999999" />
            <path d="M1 3h3v2H1zM5 3h3v2H5zM9 3h3v2H9zM1 6h3v2H1zM5 6h3v2H5zM9 6h3v2H9zM1 9h3v1H1zM5 9h3v1H5zM9 9h3v1H9z" fill="#ffffff" />
          </svg>
          <span className={table.active ? 'text-[#e3c829]' : ''}>{table.name}</span>
        </div>
        <ul className="pr-[7px] pl-[5px] text-[11px]">
          {table.fields.map((field) => (
            <li key={field.label}>
              <label className="mb-px flex h-[21px] items-center rounded-xs border-b border-[#3a3a3a] bg-[#646464] pl-7 whitespace-nowrap">
                <span className="relative flex h-3 w-3 shrink-0">
                  <input
                    type="checkbox"
                    defaultChecked={field.checked}
                    className="peer h-3 w-3 appearance-none border-2 border-[#c6c6c6] bg-white checked:border-[#e3c829] checked:bg-[#e3c829]"
                  />
                  <svg width={12} height={12} className="pointer-events-none absolute inset-0 hidden peer-checked:block">
                    <path d="M2.500 6L5 8.500L9.500 3" fill="none" stroke="#333333" strokeWidth={1.500} />
                  </svg>
                </span>
                <svg width={9} height={9} className={`mr-2 ml-[5px] shrink-0 ${field.sum ? '' : 'invisible'}`}>
                  <path d="M8.500 2V.5H.5L5 4.500L.5 8.500H8.500V7" fill="none" stroke="#a3a3a3" />
                </svg>
                {field.label}
              </label>
            </li>
          ))}
        </ul>
      </div>
    ))}
  </aside>
);

const App = () => (
  <div className="flex h-screen flex-col bg-[#a3a3a3] p-1 font-['Open_Sans','Noto_Sans',sans-serif]">
    <div className="flex min-h-0 flex-1">
      <NavRail />
      <div className="flex min-w-0 flex-1 flex-col">
        <Canvas />
        <PageTabs />
      </div>
      <VisualizationsPane />
      <FieldsPane />
    </div>
    <footer className="flex h-[22px] shrink-0 items-center bg-[#333333] pl-2 text-[11px] text-white">SIDE 2 AF 6</footer>
  </div>
);

export default App;
